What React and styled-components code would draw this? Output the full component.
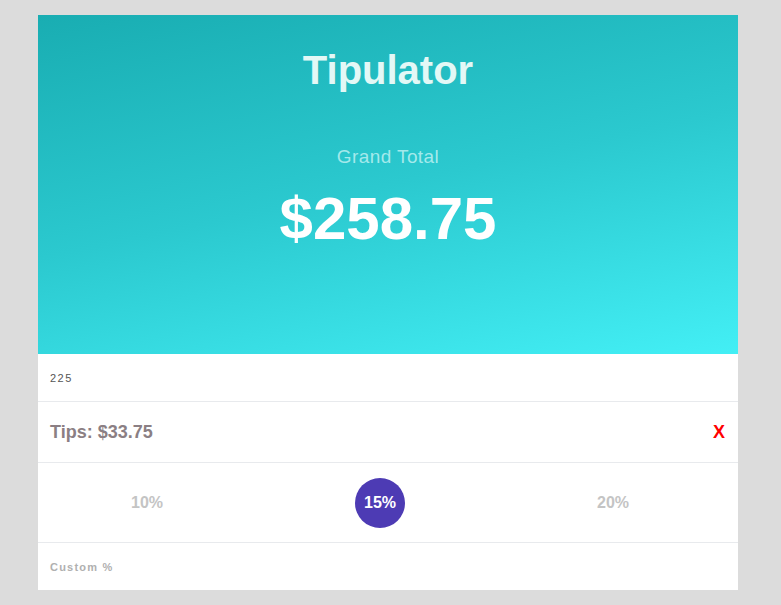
import styled, { createGlobalStyle } from "styled-components";

const GlobalStyle = createGlobalStyle`
  html, body {
    margin: 0;
    padding: 0;
    background: #dcdcdc;
    font-family: "Liberation Sans", Arial, sans-serif;
  }
`;

const Page = styled.div`
  padding-top: 15px;
  padding-left: 38px;
  min-height: 605px;
  box-sizing: border-box;
`;

const Card = styled.div`
  width: 700px;
  background: #fff;
`;

const Header = styled.div`
  height: 339px;
  background: linear-gradient(168deg, #19adb2 0%, #2bc9cf 50%, #43eff5 100%);
  display: flex;
  flex-direction: column;
  align-items: center;
  box-sizing: border-box;
  padding-top: 35px;
`;

const Title = styled.h1`
  margin: 0;
  font-size: 40px;
  line-height: 40px;
  font-weight: 700;
  color: #e3f8f6;
`;

const Label = styled.div`
  margin-top: 57px;
  font-size: 19px;
  line-height: 20px;
  letter-spacing: 0.4px;
  color: rgba(220, 250, 250, 0.7);
`;

const Total = styled.div`
  margin-top: 22px;
  font-size: 60px;
  line-height: 60px;
  font-weight: 700;
  color: #fff;
`;

const Row = styled.div`
  height: ${(p) => p.h}px;
  display: flex;
  align-items: center;
  padding: 0 12px;
  border-top: ${(p) => (p.first ? "none" : "1px solid #e8eaed")};
`;

const SmallText = styled.span`
  font-size: 11px;
  letter-spacing: ${(p) => p.spacing || "1.5px"};
  color: ${(p) => p.color};
  font-weight: ${(p) => (p.bold ? 700 : 400)};
`;

const Tips = styled.span`
  flex: 1;
  font-size: 18px;
  font-weight: 700;
  color: #8b7f84;
`;

const Clear = styled.span`
  font-size: 18px;
  font-weight: 700;
  color: #ff0000;
  margin-right: 1px;
`;

const PercentRow = styled.div`
  height: 79px;
  border-top: 1px solid #e8eaed;
  display: flex;
  align-items: center;
  justify-content: space-between;
  padding: 0 100px 0 84px;
`;

const Percent = styled.div`
  width: 50px;
  height: 50px;
  border-radius: 50%;
  display: flex;
  align-items: center;
  justify-content: center;
  font-size: 16px;
  font-weight: 700;
  color: ${(p) => (p.active ? "#fff" : "#c4c4c4")};
  background: ${(p) => (p.active ? "#4d3bb4" : "transparent")};
`;

const App = () => {
  return (
    <Page>
      <GlobalStyle />
      <Card>
        <Header>
          <Title>Tipulator</Title>
          <Label>Grand Total</Label>
          <Total>$258.75</Total>
        </Header>
        <Row h={47} first>
          <SmallText color="#555">225</SmallText>
        </Row>
        <Row h={60}>
          <Tips>Tips: $33.75</Tips>
          <Clear>X</Clear>
        </Row>
        <PercentRow>
          <Percent>10%</Percent>
          <Percent active>15%</Percent>
          <Percent>20%</Percent>
        </PercentRow>
        <Row h={47}>
          <SmallText color="#b0b0b0" bold spacing="1.2px">
            Custom %
          </SmallText>
        </Row>
      </Card>
    </Page>
  );
};

export default App;
